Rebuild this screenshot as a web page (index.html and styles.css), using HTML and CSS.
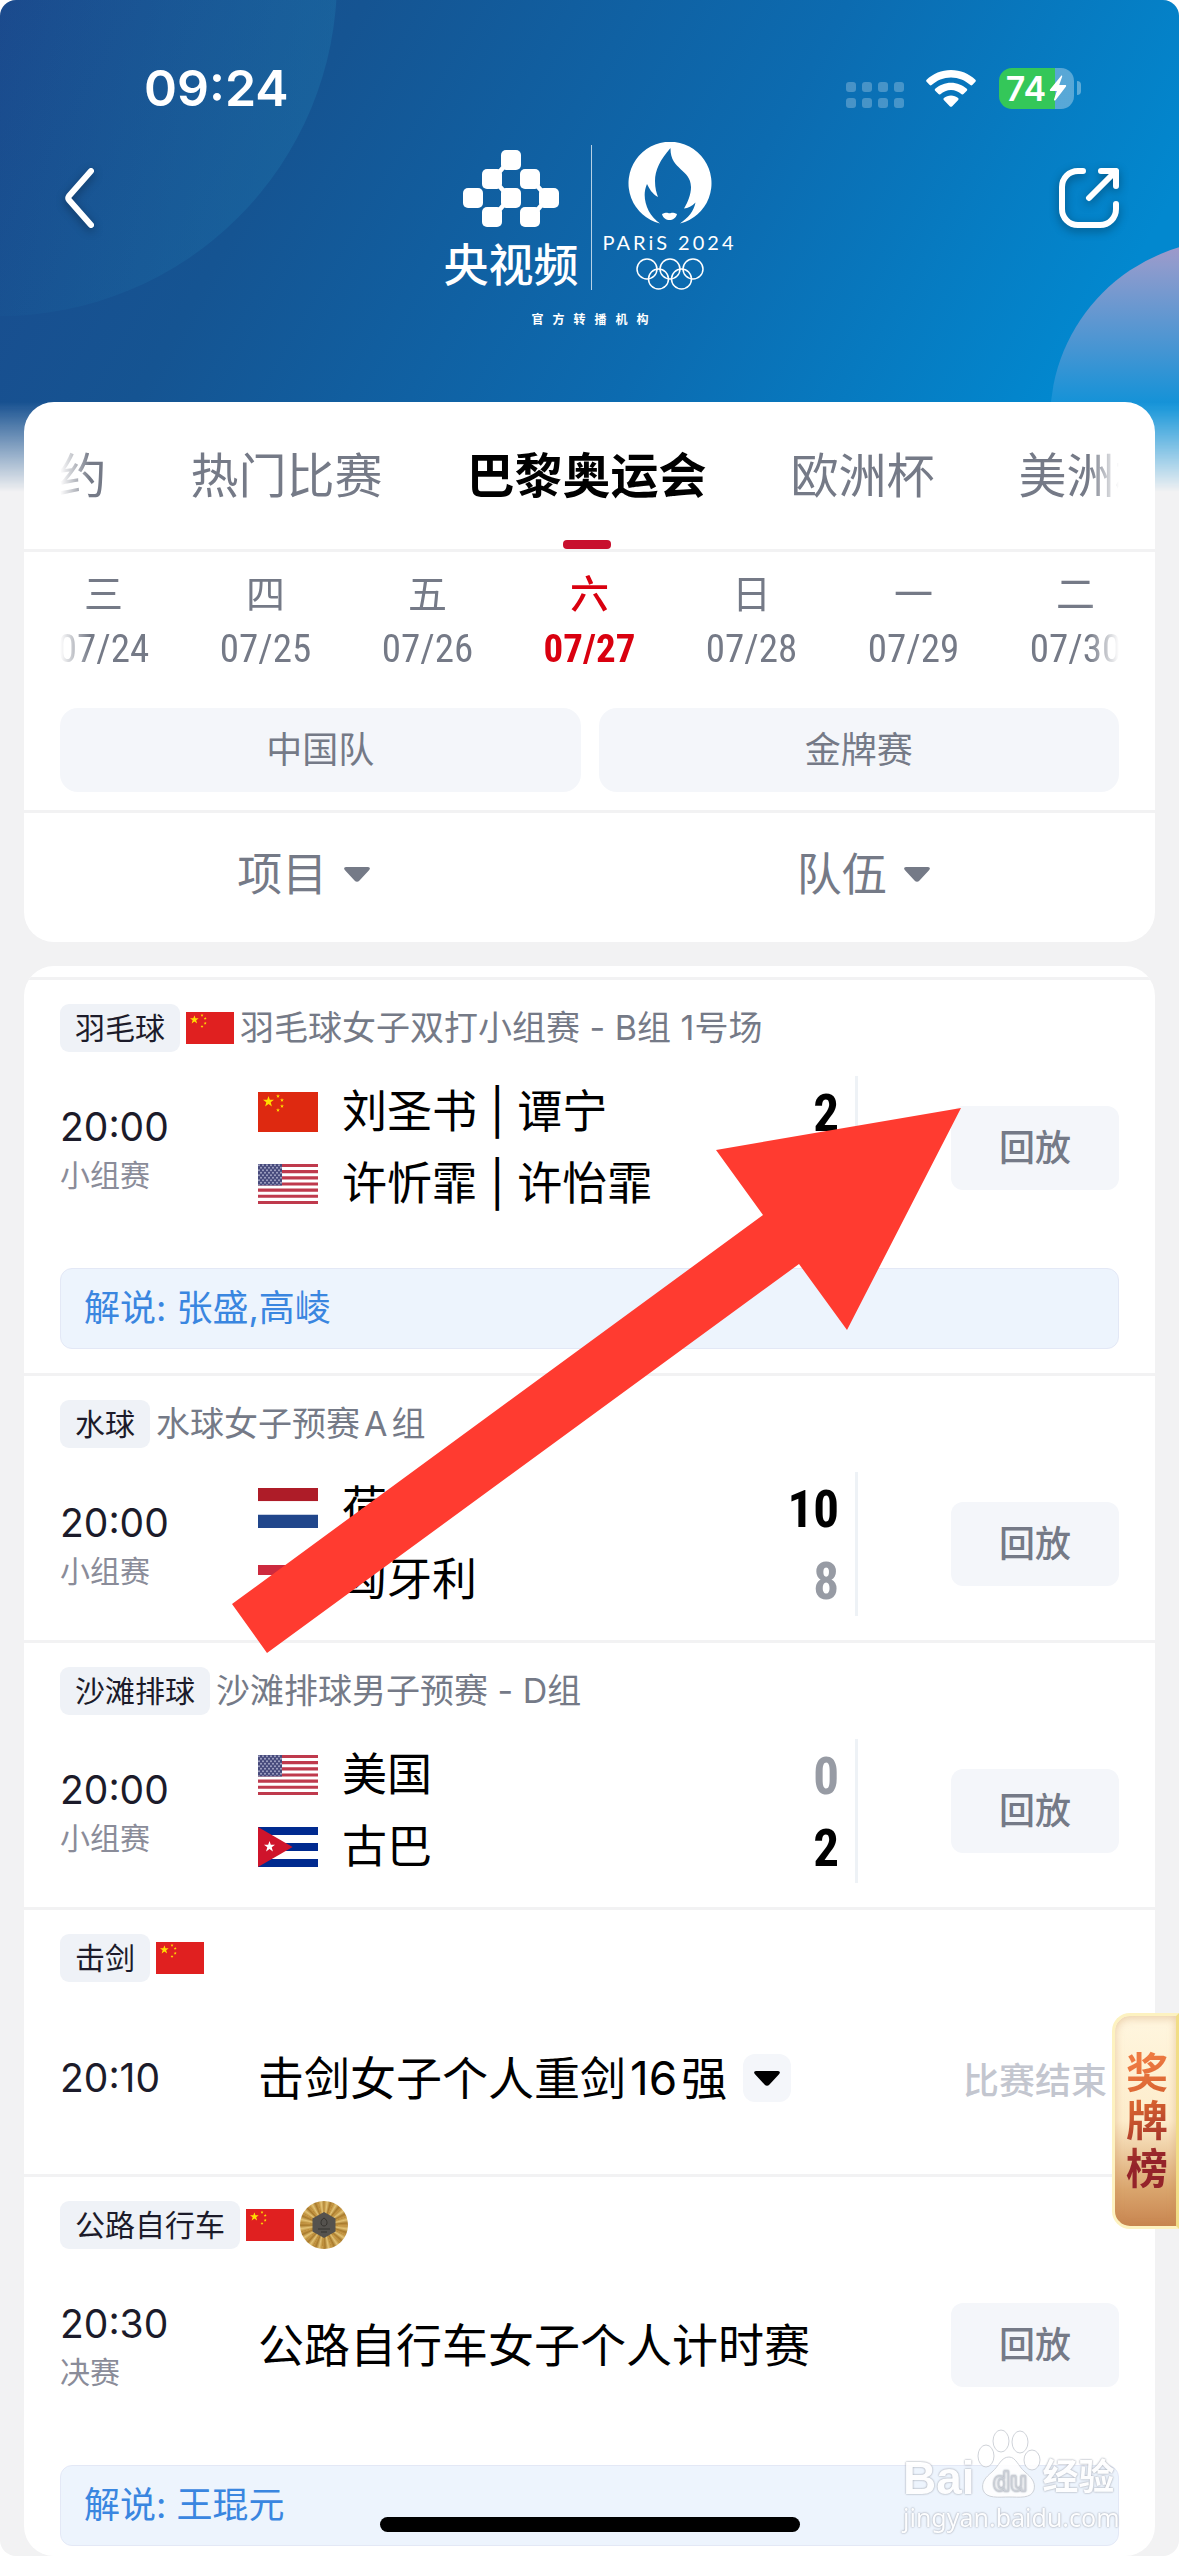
FILE: index.html
```html
<!DOCTYPE html>
<html lang="zh-CN">
<head>
    <meta charset="UTF-8">
    <meta name="viewport" content="width=device-width, initial-scale=1.0">
    <title>央视频 - 巴黎奥运会赛程</title>
    <link rel="stylesheet" href="styles.css">
</head>
<body>
    <!-- 国旗和图标 -->
    <svg class="sprite" aria-hidden="true">
        <defs>
            <symbol id="star" viewBox="0 0 20 20">
                <path d="M10 0l2.4 7H20l-6 4.5 2.2 7.5L10 14.500l-6.200 4.500L6 11.500 0 7h7.600z"/>
            </symbol>
            <symbol id="flag-cn" viewBox="0 0 60 40">
                <path fill="currentColor" d="M0 0h60v40H0z"/>
                <g fill="#ffde00">
                    <use href="#star" x="5" y="4" width="11" height="11"/>
                    <use href="#star" x="18" y="2" width="4" height="4"/>
                    <use href="#star" x="22" y="6" width="4" height="4"/>
                    <use href="#star" x="22" y="12" width="4" height="4"/>
                    <use href="#star" x="18" y="16" width="4" height="4"/>
                </g>
            </symbol>
            <pattern id="us-stars" width="4" height="4" patternUnits="userSpaceOnUse">
                <circle cx="1" cy="1" r="0.800" fill="#b9bbd6"/>
                <circle cx="3" cy="3" r="0.800" fill="#b9bbd6"/>
            </pattern>
            <symbol id="flag-us" viewBox="0 0 60 32" preserveAspectRatio="none">
                <path fill="#fff" d="M0 0h60v32H0z"/>
                <path stroke="#bf3a4d" stroke-width="2.460" d="M0 1.200h60M0 6.100h60M0 11.100h60M0 16h60M0 20.900h60M0 25.800h60M0 30.800h60"/>
                <path fill="#464a7c" d="M0 0h24v17.200H0z"/>
                <path fill="url(#us-stars)" d="M0 0h24v17H0z"/>
            </symbol>
            <symbol id="flag-nl" viewBox="0 0 60 40">
                <path fill="#ae1c28" d="M0 0h60v13.300H0z"/>
                <path fill="#fff" d="M0 13.300h60v13.400H0z"/>
                <path fill="#21468b" d="M0 26.700h60V40H0z"/>
            </symbol>
            <symbol id="flag-hu" viewBox="0 0 60 30">
                <path fill="#cd2a3e" d="M0 0h60v10H0z"/>
                <path fill="#fff" d="M0 10h60v10H0z"/>
                <path fill="#436f4d" d="M0 20h60v10H0z"/>
            </symbol>
            <symbol id="flag-cu" viewBox="0 0 60 40">
                <path fill="#fff" d="M0 0h60v40H0z"/>
                <path fill="#002a8f" d="M0 0h60v8H0zM0 16h60v8H0zM0 32h60v8H0z"/>
                <path fill="#cf142b" d="M0 0l34.600 20L0 40z"/>
                <use href="#star" x="6" y="14" width="11" height="11" fill="#fff"/>
            </symbol>
            <symbol id="caret" viewBox="0 0 26 15">
                <path fill="currentColor" d="M2 0h22c2 0 2.500 2 1 3.200L15.500 13.500c-1.500 1.600-3.500 1.600-5 0L1 3.200C-.5 2 0 0 2 0z"/>
            </symbol>
        </defs>
    </svg>

    <div class="screen">
        <div class="hero"></div>

        <div class="status-bar">
            <span class="clock">09:24</span>
            <div class="status-icons">
                <svg class="signal" viewBox="0 0 58 26" fill="#fff" fill-opacity="0.250">
                    <rect width="10" height="10" rx="3"/><rect x="16" width="10" height="10" rx="3"/><rect x="32" width="10" height="10" rx="3"/><rect x="48" width="10" height="10" rx="3"/>
                    <rect y="16" width="10" height="10" rx="3"/><rect x="16" y="16" width="10" height="10" rx="3"/><rect x="32" y="16" width="10" height="10" rx="3"/><rect x="48" y="16" width="10" height="10" rx="3"/>
                </svg>
                <svg class="wifi" viewBox="0 0 50 37" fill="#fff">
                    <path d="M25 0C15.500 0 7 3.700.6 9.700c-.6.600-.6 1.400 0 2L3.700 15c.6.600 1.300.6 1.900 0C10.800 10.200 17.600 7.400 25 7.400s14.200 2.800 19.400 7.600c.6.600 1.300.6 1.900 0l3.100-3.300c.6-.6.6-1.400 0-2C43 3.700 34.500 0 25 0z"/>
                    <path d="M25 12.700c-6 0-11.600 2.300-15.800 6.100-.6.600-.6 1.300 0 1.900l3.300 3.400c.5.600 1.300.6 1.900.1C17.300 21.700 21 20 25 20s7.700 1.700 10.600 4.200c.6.500 1.400.5 1.900-.1l3.300-3.400c.6-.6.6-1.300 0-1.900-4.200-3.800-9.800-6.100-15.800-6.100z"/>
                    <path d="M25 25.500c-2.700 0-5.200 1-7.100 2.600-.6.500-.6 1.300-.1 1.800l6.200 6.500c.6.600 1.400.6 2 0l6.200-6.500c.5-.5.500-1.300-.1-1.800-1.900-1.600-4.400-2.600-7.100-2.600z"/>
                </svg>
                <div class="battery">
                    <span class="battery-level">74</span>
                    <svg viewBox="0 0 18 26" fill="#fff"><path d="M12 1L1 14.500c-.5.800 0 1.500.8 1.500h6L5 24.500c-.3 1 .8 1.500 1.500.7L17 11.500c.5-.8 0-1.500-.8-1.500h-6l3-8.500c.2-1-.7-1.200-1.200-.5z"/></svg>
                </div>
                <span class="battery-cap"></span>
            </div>
        </div>

        <header class="nav">
            <button class="icon-btn" aria-label="返回">
                <svg viewBox="0 0 60 60" fill="none" stroke="#fff" stroke-width="6" stroke-linecap="round" stroke-linejoin="round"><path d="M27 3L5 28q-1.500 2 0 4L27 57"/></svg>
            </button>
            <div class="brand">
                <div class="brand-row">
                    <div class="brand-ysp">
                        <svg viewBox="0 0 96 78" fill="#fff">
                            <rect x="38" width="20" height="20" rx="5"/>
                            <rect x="19" y="19" width="20" height="20" rx="5"/><rect x="57" y="19" width="20" height="20" rx="5"/>
                            <rect y="38" width="20" height="20" rx="5"/><rect x="38" y="38" width="20" height="20" rx="5"/><rect x="76" y="38" width="20" height="20" rx="5"/>
                            <rect x="19" y="57" width="20" height="20" rx="5"/><rect x="57" y="57" width="20" height="20" rx="5"/>
                            <path d="M38.500 16l3 3.500-3 3.500-3-3.500zM38.500 35l3 3.500-3 3.500-3-3.500zM38.500 54l3 3.500-3 3.500-3-3.500zM76.500 35l3 3.500-3 3.500-3-3.500zM76.500 54l3 3.500-3 3.500-3-3.500z"/>
                        </svg>
                        <span>央视频</span>
                    </div>
                    <div class="brand-line"></div>
                    <div class="brand-paris">
                        <svg class="flame" viewBox="0 0 84 84" fill="#fff">
                            <path d="M32 81.500A41.500 41.500 0 1 1 52 81.500C60 76 66 69 67.500 60.500 64 64 60 66.500 56 66.500 60 60 63 52 63 45 63 27 42 28 42.500 6 32 18 27 28 27 39 27 46 28.500 51 30 55 24 52 21 46 19 42 13 55 19 73 32 81.500z"/>
                            <path d="M34 72c2.500-1 4.500-1.500 6-1 1 .4 2 .4 3 0 1.500-.5 3.500 0 6 1-2 8-13 8-15 0z"/>
                        </svg>
                        <span>PARiS 2024</span>
                        <svg class="rings" viewBox="0 0 68 32" fill="none" stroke="#fff" stroke-width="1.500">
                            <circle cx="11" cy="11" r="10"/><circle cx="34" cy="11" r="10"/><circle cx="57" cy="11" r="10"/>
                            <circle cx="22.500" cy="21" r="10"/><circle cx="45.500" cy="21" r="10"/>
                        </svg>
                    </div>
                </div>
                <p class="brand-caption">官方转播机构</p>
            </div>
            <button class="icon-btn" aria-label="分享">
                <svg viewBox="0 0 60 60" fill="none" stroke="#fff" stroke-width="6" stroke-linecap="round" stroke-linejoin="round"><path d="M24 3h-5C10 3 3 10 3 19v22c0 9 7 16 16 16h22c9 0 16-7 16-16v-5M42 3h15v15M57 3L30 30"/></svg>
            </button>
        </header>

        <section class="card filters">
            <nav class="tabs">
                <a href="#">预约</a>
                <a href="#">热门比赛</a>
                <a href="#" class="active">巴黎奥运会</a>
                <a href="#">欧洲杯</a>
                <a href="#">美洲杯</a>
            </nav>
            <div class="dates">
                <button>三<span>07/24</span></button>
                <button>四<span>07/25</span></button>
                <button>五<span>07/26</span></button>
                <button class="active">六<span>07/27</span></button>
                <button>日<span>07/28</span></button>
                <button>一<span>07/29</span></button>
                <button>二<span>07/30</span></button>
            </div>
            <div class="chips">
                <button>中国队</button>
                <button>金牌赛</button>
            </div>
            <div class="selects">
                <label><select aria-label="项目"><option>项目</option></select><svg class="caret"><use href="#caret"/></svg></label>
                <label><select aria-label="队伍"><option>队伍</option></select><svg class="caret"><use href="#caret"/></svg></label>
            </div>
        </section>

        <main class="card matches">
            <article class="match">
                <div class="match-head">
                    <span class="tag">羽毛球</span>
                    <svg class="mini-flag"><use href="#flag-cn"/></svg>
                    <span class="match-name">羽毛球女子双打小组赛 - B组 1号场</span>
                </div>
                <div class="match-body">
                    <div class="time">20:00<small>小组赛</small></div>
                    <div class="teams">
                        <div class="team"><svg class="flag cn"><use href="#flag-cn"/></svg><span>刘圣书 | 谭宁</span><b>2</b></div>
                        <div class="team"><svg class="flag"><use href="#flag-us"/></svg><span>许忻霏 | 许怡霏</span><b class="lose">0</b></div>
                    </div>
                    <button class="replay">回放</button>
                </div>
                <p class="commentary">解说: 张盛,高崚</p>
            </article>

            <article class="match">
                <div class="match-head">
                    <span class="tag">水球</span>
                    <span class="match-name">水球女子预赛<span class="latin">A</span>组</span>
                </div>
                <div class="match-body">
                    <div class="time">20:00<small>小组赛</small></div>
                    <div class="teams">
                        <div class="team"><svg class="flag"><use href="#flag-nl"/></svg><span>荷兰</span><b>10</b></div>
                        <div class="team"><svg class="flag"><use href="#flag-hu"/></svg><span>匈牙利</span><b class="lose">8</b></div>
                    </div>
                    <button class="replay">回放</button>
                </div>
            </article>

            <article class="match">
                <div class="match-head">
                    <span class="tag">沙滩排球</span>
                    <span class="match-name">沙滩排球男子预赛 - D组</span>
                </div>
                <div class="match-body">
                    <div class="time">20:00<small>小组赛</small></div>
                    <div class="teams">
                        <div class="team"><svg class="flag"><use href="#flag-us"/></svg><span>美国</span><b class="lose">0</b></div>
                        <div class="team"><svg class="flag"><use href="#flag-cu"/></svg><span>古巴</span><b>2</b></div>
                    </div>
                    <button class="replay">回放</button>
                </div>
            </article>

            <article class="match">
                <div class="match-head">
                    <span class="tag">击剑</span>
                    <svg class="mini-flag"><use href="#flag-cn"/></svg>
                </div>
                <div class="match-body">
                    <div class="time single">20:10</div>
                    <div class="event">
                        <span>击剑女子个人重剑<span class="latin">16</span>强</span>
                        <button class="expand" aria-label="展开"><svg class="caret"><use href="#caret"/></svg></button>
                    </div>
                    <span class="finished">比赛结束</span>
                </div>
            </article>

            <article class="match">
                <div class="match-head">
                    <span class="tag">公路自行车</span>
                    <svg class="mini-flag"><use href="#flag-cn"/></svg>
                    <span class="medal"><svg viewBox="0 0 26 26"><path fill="#55524e" d="M13 0l11.500 6.500v13L13 26 1.500 19.500v-13z"/><path fill="none" stroke="#35332f" d="M13 6c-4 2-4 8 0 8s4-6 0-8zM7 17h12M10 20h6"/></svg></span>
                </div>
                <div class="match-body">
                    <div class="time">20:30<small>决赛</small></div>
                    <div class="event">公路自行车女子个人计时赛</div>
                    <button class="replay">回放</button>
                </div>
                <p class="commentary">解说: 王琨元</p>
            </article>
        </main>

        <!-- 悬浮层 -->
        <a href="#" class="medal-board"><span>奖牌榜</span></a>
        <svg class="pointer" viewBox="0 0 730 546" aria-hidden="true">
            <path fill="#ff3b30" d="M729 0L484 42l47 65L0 496l35 49 532-389 48 66z"/>
        </svg>
        <div class="watermark">
            <div class="wm-top">
                <span>Bai</span>
                <svg viewBox="0 0 62 70" fill="#fff" stroke="#c9cdd4" stroke-width="1">
                    <ellipse cx="8" cy="27" rx="8" ry="11"/><ellipse cx="23" cy="12" rx="8" ry="11"/><ellipse cx="42" cy="13" rx="8" ry="11"/><ellipse cx="54" cy="31" rx="8" ry="10"/>
                    <path d="M31 28c-8 0-10 9-17 15-6 5-11 10-9 18 3 9 16 7 26 7s22 2 25-7c2-8-3-13-9-18-7-6-9-15-16-15z"/>
                    <text x="32" y="62" text-anchor="middle">du</text>
                </svg>
                <span class="wm-cn">经验</span>
            </div>
            <div class="wm-url">jingyan.baidu.com</div>
        </div>
        <div class="home-indicator"></div>
    </div>
</body>
</html>
```
FILE: styles.css
```css
:root {
    --gray: #757a87;
    --line: #f2f2f3;
    --chip: #f4f6fa;
    --narrow: "Liberation Sans Narrow", "Roboto Condensed", Roboto, sans-serif;
}

* {
    box-sizing: border-box;
}

body {
    margin: 0;
    background: #fff;
    font-family: Inter, "Noto Sans CJK SC", sans-serif;
    color: #000;
}

button, select {
    margin: 0;
    padding: 0;
    border: none;
    background: none;
    font: inherit;
    color: inherit;
}

a {
    color: inherit;
    text-decoration: none;
}

p {
    margin: 0;
}

svg {
    display: block;
    flex: none;
}

.sprite {
    position: absolute;
    width: 0;
    height: 0;
}

.screen {
    position: relative;
    overflow: hidden;
    border-radius: 16px;
    background: #f2f2f3;
}

/* 顶部蓝色背景 */
.hero {
    position: absolute;
    top: 0;
    left: 0;
    right: 0;
    height: 492px;
    overflow: hidden;
    background: linear-gradient(120deg, #1b4a8d 0%, #155492 25%, #0c6bb0 58%, #0288cf 88%);
    -webkit-mask-image: linear-gradient(#000 402px, transparent);
    mask-image: linear-gradient(#000 402px, transparent);
}

.hero::before,
.hero::after {
    content: "";
    position: absolute;
    border-radius: 50%;
}

.hero::before {
    left: -337px;
    top: -358px;
    width: 674px;
    height: 674px;
    background: linear-gradient(100deg, rgba(26, 106, 168, 0) 50%, rgba(30, 115, 170, 0.5));
}

.hero::after {
    right: -231px;
    top: 240px;
    width: 360px;
    height: 360px;
    background: linear-gradient(#a597c8 0, #8f9bcd 24px, #4595d3 110px, #0e92d8 170px);
}

/* 状态栏 */
.status-bar {
    position: relative;
    display: flex;
    align-items: center;
    justify-content: space-between;
    padding: 64px 98px 0 144px;
    color: #fff;
}

.clock {
    font-size: 50px;
    line-height: 48px;
    font-weight: 600;
}

.status-icons {
    display: flex;
    align-items: center;
}

.signal {
    width: 58px;
    height: 26px;
    margin-top: 14px;
    margin-right: 22px;
}

.wifi {
    width: 50px;
    height: 37px;
    margin-right: 23px;
}

.battery {
    display: flex;
    align-items: center;
    justify-content: center;
    gap: 3px;
    width: 75px;
    height: 41px;
    border-radius: 13px;
    background: linear-gradient(90deg, #34c759 75%, rgba(255, 255, 255, 0.33) 75%);
    font-size: 34px;
    line-height: 41px;
    font-weight: 600;
}

.battery svg {
    width: 18px;
    height: 26px;
}

.battery-cap {
    width: 4px;
    height: 14px;
    margin-left: 3px;
    border-radius: 0 4px 4px 0;
    background: rgba(255, 255, 255, 0.35);
}

/* 导航栏 */
.nav {
    position: relative;
    display: flex;
    justify-content: space-between;
    height: 290px;
    padding: 30px 60px 0;
    color: #fff;
}

.icon-btn {
    width: 60px;
    height: 60px;
    margin-top: 26px;
    filter: drop-shadow(0 3px 5px rgba(0, 0, 0, 0.35));
}

.icon-btn:first-child {
    padding-left: 4px;
}

.icon-btn svg {
    width: 60px;
    height: 60px;
    overflow: visible;
}

.brand-row {
    display: flex;
    gap: 12px;
}

.brand-ysp,
.brand-paris {
    display: flex;
    flex-direction: column;
    align-items: center;
}

.brand-ysp {
    padding-top: 8px;
}

.brand-ysp svg {
    width: 96px;
    height: 78px;
}

.brand-ysp span {
    margin-top: 12px;
    font-size: 45px;
    line-height: 52px;
    font-weight: 500;
}

.brand-line {
    width: 1px;
    height: 145px;
    margin-top: 3px;
    background: rgba(255, 255, 255, 0.7);
}

.brand-paris {
    width: 132px;
}

.flame {
    width: 84px;
    height: 84px;
}

.brand-paris span {
    margin-top: 4px;
    font-family: Lato, sans-serif;
    font-size: 20px;
    line-height: 24px;
    letter-spacing: 3px;
    white-space: nowrap;
}

.rings {
    width: 68px;
    height: 32px;
    margin-top: 4px;
}

.brand-caption {
    margin-top: 20px;
    padding-left: 10px;
    font-size: 12px;
    line-height: 16px;
    font-weight: 700;
    letter-spacing: 9px;
    text-align: center;
}

/* 白色卡片 */
.card {
    position: relative;
    margin: 0 24px;
    border-radius: 30px;
    background: #fff;
    overflow: hidden;
}

.tabs,
.dates {
    display: flex;
    justify-content: center;
    margin: 0 36px;
    overflow: hidden;
    color: var(--gray);
    -webkit-mask-image: linear-gradient(90deg, transparent, #000 30px, #000 calc(100% - 30px), transparent);
    mask-image: linear-gradient(90deg, transparent, #000 30px, #000 calc(100% - 30px), transparent);
}

.tabs {
    gap: 84px;
    padding-right: 6px;
    font-size: 48px;
    line-height: 147px;
}

.tabs a {
    position: relative;
    flex: none;
}

.tabs .active {
    color: #000;
    font-weight: 700;
}

.tabs .active::after {
    content: "";
    position: absolute;
    left: 50%;
    bottom: 0;
    width: 48px;
    height: 9px;
    margin-left: -24px;
    border-radius: 4px;
    background: #c8102e;
}

.filters::before {
    content: "";
    position: absolute;
    top: 147px;
    left: 0;
    right: 0;
    height: 3px;
    background: var(--line);
}

.dates {
    padding: 21px 0 27px;
}

.dates button {
    flex: 0 0 162px;
    font-size: 39px;
    line-height: 48px;
}

.dates span {
    display: block;
    font-family: var(--narrow);
    font-size: 39px;
    line-height: 63px;
}

.dates .active {
    color: #d9000f;
    font-weight: 500;
}

.dates .active span {
    font-weight: 700;
}

.chips {
    display: grid;
    grid-template-columns: 1fr 1fr;
    gap: 18px;
    padding: 0 36px 18px;
    border-bottom: 3px solid var(--line);
}

.chips button {
    border-radius: 18px;
    background: var(--chip);
    color: var(--gray);
    font-size: 36px;
    line-height: 84px;
}

.selects {
    display: grid;
    grid-template-columns: 1fr 1fr;
    padding: 0 12px 6px 0;
    color: var(--gray);
}

.selects label {
    display: flex;
    align-items: center;
    justify-content: center;
    gap: 16px;
}

.selects select {
    appearance: none;
    -webkit-appearance: none;
    height: 123px;
    font-size: 45px;
}

.caret {
    width: 26px;
    height: 15px;
}

/* 比赛列表 */
.matches {
    margin-top: 24px;
    padding: 11px 0 10px;
}

.match {
    padding: 24px 36px;
    border-top: 3px solid var(--line);
}

.match:last-child {
    padding-bottom: 0;
}

.match-head {
    display: flex;
    align-items: center;
    gap: 6px;
    height: 48px;
}

.tag {
    padding: 0 15px;
    border-radius: 9px;
    background: #eff2f7;
    color: #1c1b2a;
    font-size: 30px;
    line-height: 48px;
}

.mini-flag {
    width: 48px;
    height: 32px;
    color: #e02020;
}

.match-name {
    color: var(--gray);
    font-size: 34px;
    line-height: 48px;
}

/* 中文之间的字母数字留空 */
.latin {
    margin: 0 4px;
}

.match-body {
    display: grid;
    grid-template-columns: 198px 1fr 168px;
    align-items: center;
    min-height: 144px;
    margin-top: 24px;
}

.time {
    padding-top: 6px;
    color: #1c1b2a;
    font-size: 39px;
    line-height: 48px;
}

.time.single {
    padding-top: 0;
}

.time small {
    display: block;
    color: #8a8c99;
    font-size: 30px;
}

.teams {
    margin-right: 93px;
    padding-right: 16px;
    border-right: 3px solid #eef2f6;
}

.team {
    display: flex;
    align-items: center;
    height: 72px;
    font-size: 45px;
    line-height: 72px;
}

.flag {
    width: 60px;
    height: 40px;
    margin-right: 24px;
}

.flag.cn {
    color: #de2910;
}

.team b {
    margin-left: auto;
    padding-top: 4px;
    font-family: var(--narrow);
    font-size: 51px;
}

.team .lose {
    color: #979ba4;
}

.replay {
    border-radius: 12px;
    background: var(--chip);
    color: var(--gray);
    font-size: 36px;
    line-height: 84px;
    font-weight: 500;
}

.event {
    display: flex;
    align-items: center;
    gap: 16px;
    font-size: 46px;
    line-height: 72px;
    white-space: nowrap;
}

.expand {
    display: flex;
    align-items: center;
    justify-content: center;
    width: 48px;
    height: 48px;
    border-radius: 12px;
    background: var(--chip);
}

.finished {
    color: #c3c6cf;
    font-size: 36px;
    font-weight: 500;
    text-align: center;
    white-space: nowrap;
}

.commentary {
    margin-top: 48px;
    padding: 0 23px;
    border: 1px solid #e3e8f6;
    border-radius: 12px;
    background: #edf4fd;
    color: #3a86e0;
    font-size: 36px;
    line-height: 79px;
}

.medal {
    display: flex;
    align-items: center;
    justify-content: center;
    width: 48px;
    height: 48px;
    border-radius: 50%;
    background: repeating-conic-gradient(#b98a36 0deg, #e3c274 8deg, #a87a2c 16deg, #c99a48 23deg);
}

.medal svg {
    width: 26px;
    height: 26px;
}

/* 右侧奖牌榜入口 */
.medal-board {
    position: absolute;
    right: 0;
    bottom: 327px;
    padding: 33px 8px 33px 11px;
    border: 3px solid #fdf2c0;
    border-right-color: #f1dd86;
    border-radius: 18px 0 0 18px;
    background: linear-gradient(#fff6df, #fdeccb 50%, #d9a46c 83%, #c88550);
    box-shadow: inset 0 2px 8px rgba(200, 140, 80, 0.4);
}

.medal-board span {
    display: block;
    width: 42px;
    font-size: 42px;
    line-height: 48px;
    font-weight: 700;
    word-break: break-all;
    background: linear-gradient(160deg, #ee7a42 10%, #d4602f 40%, #94232a 75%);
    -webkit-background-clip: text;
    background-clip: text;
    color: transparent;
}

.pointer {
    position: absolute;
    left: 232px;
    top: 1108px;
    width: 730px;
    height: 546px;
}

.watermark {
    position: absolute;
    right: 64px;
    bottom: 21px;
    width: 212px;
    color: #fff;
    text-shadow: 0 0 2px #a9aeb8, 0 0 2px #a9aeb8;
    opacity: 0.9;
}

.wm-top {
    display: flex;
    align-items: flex-end;
    gap: 3px;
    font-family: "Liberation Sans", "Noto Sans CJK SC", sans-serif;
    font-size: 46px;
    line-height: 42px;
    font-weight: 700;
}

.wm-top svg {
    width: 62px;
    height: 70px;
    overflow: visible;
    font-size: 28px;
}

.wm-cn {
    font-size: 36px;
}

.wm-url {
    font-family: "Noto Sans", sans-serif;
    font-size: 25px;
    line-height: 36px;
}

.home-indicator {
    position: absolute;
    left: 50%;
    bottom: 24px;
    width: 420px;
    height: 15px;
    margin-left: -210px;
    border-radius: 8px;
    background: #000;
}
```
